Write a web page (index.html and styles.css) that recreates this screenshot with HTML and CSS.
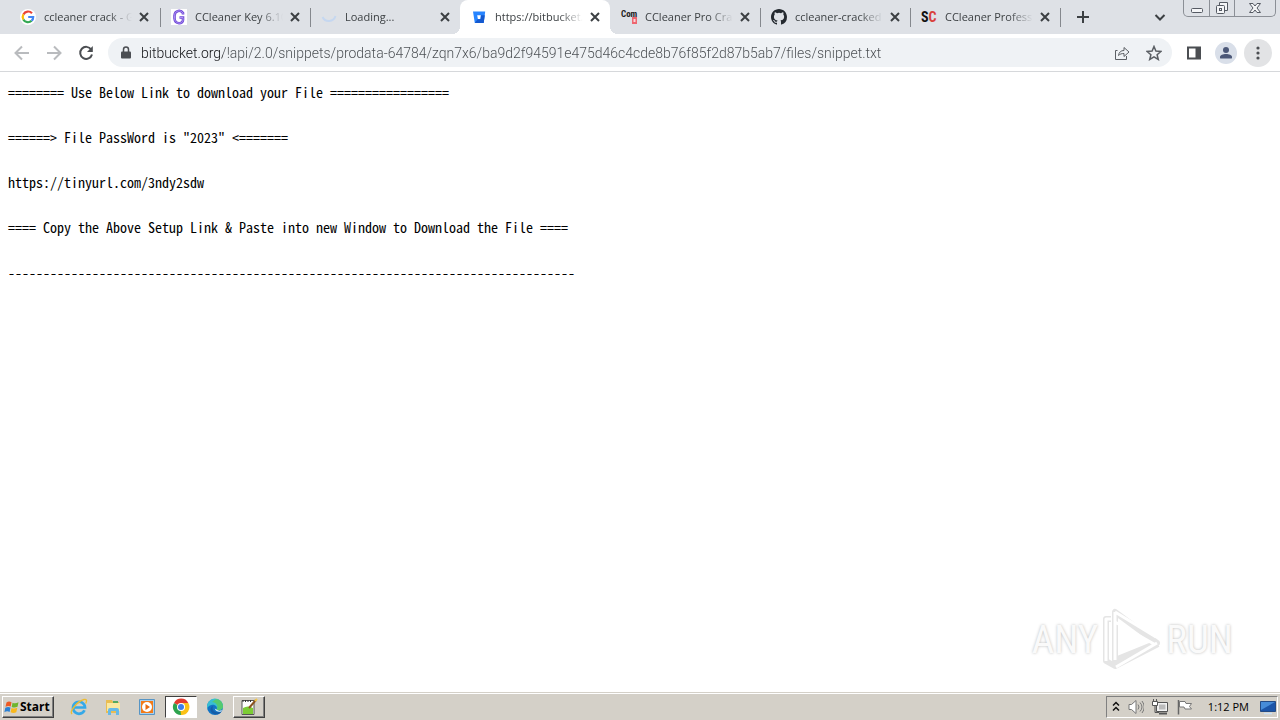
FILE: index.html
```html
<!DOCTYPE html>
<html lang="en">
<head>
<meta charset="utf-8">
<title>https://bitbucket.org</title>
<link rel="stylesheet" href="styles.css">
</head>
<body>
<header class="strip">
  <nav class="tabs">
    <div class="tab">
      <svg class="fav" viewBox="0 0 16 16"><circle cx="8" cy="8" r="8" fill="#fff"/><g fill="none" stroke-width="2.2"><path d="M12 4.2A5.3 5.3 0 0 0 3.4 5.4" stroke="#ea4335"/><path d="M3.4 5.4a5.3 5.3 0 0 0 0 5.2" stroke="#fbbc05"/><path d="M3.4 10.6a5.3 5.3 0 0 0 8.2 1.2" stroke="#34a853"/><path d="M11.6 11.8A5 5 0 0 0 13.2 8H8.2" stroke="#4285f4"/></g></svg>
      <button class="title">ccleaner crack - G</button>
      <button class="close" aria-label="Close tab"><svg viewBox="0 0 16 16"><path d="M4 4l8 8M12 4l-8 8"/></svg></button>
    </div>
    <div class="tab line">
      <svg class="fav" viewBox="0 0 16 16"><path fill="#fff" d="M0 0h16v16H0z"/><path d="M12 5.500V4C10 .8 4 .8 3.500 6.500v3c.5 6 8.500 6 8.500 1.500V8.500H8.500" fill="none" stroke="#7048d8" stroke-width="2.600"/><path d="M12 5.500V4C10 .8 4 .8 3.500 6.500v3c.5 6 8.500 6 8.500 1.500V8.500H8.500" fill="none" stroke="#b9a2f5" stroke-width=".8"/></svg>
      <button class="title">CCleaner Key 6.10</button>
      <button class="close" aria-label="Close tab"><svg viewBox="0 0 16 16"><path d="M4 4l8 8M12 4l-8 8"/></svg></button>
    </div>
    <div class="tab line">
      <svg class="fav" viewBox="0 0 16 16"><path d="M1.500 8a7 7 0 0 0 13-1" fill="none" stroke="#c5d7f0" stroke-width="2"/></svg>
      <button class="title">Loading...</button>
      <button class="close" aria-label="Close tab"><svg viewBox="0 0 16 16"><path d="M4 4l8 8M12 4l-8 8"/></svg></button>
    </div>
    <div class="tab active">
      <svg class="fav" viewBox="0 0 16 16"><path d="M2 2.500h12.200L12.700 14H3.800z" fill="#2684ff"/><path d="M9.800 6.200h4L12.700 14H3.800l2.800-3.800h2.800z" fill="#1459cf"/><path d="M6.200 6.200h3.600l-.6 3.900H6.900z" fill="#fff"/></svg>
      <button class="title">https://bitbucket.o</button>
      <button class="close" aria-label="Close tab"><svg viewBox="0 0 16 16"><path d="M4 4l8 8M12 4l-8 8"/></svg></button>
    </div>
    <div class="tab">
      <svg class="fav" viewBox="0 0 16 16"><path d="M11 8h5v7h-5z" fill="#ee6670"/><path d="M12.500 10h2v3h-2z" fill="#fbd5d8"/><text x="0" y="8" class="com">Com</text></svg>
      <button class="title">CCleaner Pro Crac</button>
      <button class="close" aria-label="Close tab"><svg viewBox="0 0 16 16"><path d="M4 4l8 8M12 4l-8 8"/></svg></button>
    </div>
    <div class="tab line">
      <svg class="fav" viewBox="0 0 16 16"><path fill="#24292f" d="M8 0C3.580 0 0 3.580 0 8c0 3.540 2.290 6.530 5.470 7.590.4.070.55-.17.55-.38 0-.19-.01-.82-.01-1.490-2.010.37-2.530-.49-2.690-.94-.09-.23-.48-.94-.82-1.130-.28-.15-.68-.52-.01-.53.63-.01 1.080.58 1.230.82.72 1.210 1.870.87 2.330.66.07-.52.28-.87.51-1.070-1.780-.2-3.640-.89-3.640-3.950 0-.87.31-1.590.82-2.150-.08-.2-.36-1.020.08-2.120 0 0 .67-.21 2.200.82a7.600 7.600 0 0 1 4 0c1.530-1.040 2.200-.82 2.200-.82.44 1.100.16 1.920.08 2.120.51.56.82 1.270.82 2.150 0 3.070-1.870 3.750-3.650 3.950.29.25.54.73.54 1.480 0 1.070-.01 1.930-.01 2.200 0 .21.15.46.55.38A8 8 0 0 0 16 8c0-4.420-3.580-8-8-8z"/></svg>
      <button class="title">ccleaner-cracked</button>
      <button class="close" aria-label="Close tab"><svg viewBox="0 0 16 16"><path d="M4 4l8 8M12 4l-8 8"/></svg></button>
    </div>
    <div class="tab line">
      <svg class="fav" viewBox="0 0 16 16"><text x="0" y="13" class="sc">S<tspan class="red">C</tspan></text></svg>
      <button class="title">CCleaner Professi</button>
      <button class="close" aria-label="Close tab"><svg viewBox="0 0 16 16"><path d="M4 4l8 8M12 4l-8 8"/></svg></button>
    </div>
    <button class="newtab" aria-label="New tab"><svg viewBox="0 0 16 16"><path d="M8 2v12M2 8h12"/></svg></button>
  </nav>
  <button class="search" aria-label="Search tabs"><svg viewBox="0 0 16 16"><path d="M3.500 6L8 10.500 12.500 6"/></svg></button>
  <div class="winctl">
    <button class="min" aria-label="Minimize"><svg viewBox="0 0 16 16"><rect x="2.500" y="8.500" width="11" height="4" rx="1"/></svg></button>
    <button class="restore" aria-label="Restore"><svg viewBox="0 0 16 16"><path d="M5.500 5V2.500h8v8H11"/><rect x="2.500" y="5.500" width="8" height="8" rx="1"/><rect x="5.500" y="8.500" width="2" height="2"/></svg></button>
    <button class="quit" aria-label="Close"><svg viewBox="0 0 16 16"><path d="M2.500 3.500h3.500l2 2.500 2-2.500h3.500L10 8l3.500 4.500H10L8 10l-2 2.500H2.500L6 8z"/></svg></button>
  </div>
</header>
<div class="toolbar">
  <button class="tool off" aria-label="Back"><svg viewBox="0 0 16 16"><path d="M15 8H2M8 1.500L1.500 8 8 14.500"/></svg></button>
  <button class="tool off" aria-label="Forward"><svg viewBox="0 0 16 16"><path d="M1 8h13M8 1.500L14.500 8 8 14.500"/></svg></button>
  <button class="tool" aria-label="Reload"><svg viewBox="0 0 16 16"><path d="M13.200 4.500A6 6 0 1 0 14 9.500"/><path d="M14.800 1v6H9z" fill="#4b4e52" stroke="none"/></svg></button>
  <div class="omnibox">
    <svg class="lock" viewBox="0 0 12 16"><path d="M2 6.500h8q1 0 1 1v5q0 1-1 1H2q-1 0-1-1v-5q0-1 1-1z" fill="#4b4e52"/><path d="M3.500 7V4.500a2.500 2.500 0 0 1 5 0V7" fill="none" stroke="#4b4e52" stroke-width="1.500"/></svg>
    <input class="url" type="text" aria-label="Address" value="bitbucket.org/!api/2.0/snippets/prodata-64784/zqn7x6/ba9d2f94591e475d46c4cde8b76f85f2d87b5ab7/files/snippet.txt">
    <button class="mini" aria-label="Share"><svg viewBox="0 0 16 16"><path d="M3.500 5.500H1.500v9h11V11M4.500 10.500C5 7 7 5.500 10 5.500v-3L15 7l-5 4.500v-3c-2.500 0-4 .5-5.500 2z"/></svg></button>
    <button class="mini" aria-label="Bookmark"><svg viewBox="0 0 16 16"><path d="M8 1.500l1.900 4.600 5 .4-3.800 3.200 1.200 4.800L8 11.900l-4.300 2.600 1.200-4.800L1.100 6.500l5-.4z" stroke-width="1.500"/></svg></button>
  </div>
  <button class="tool" aria-label="Side panel"><svg viewBox="0 0 16 16"><path d="M2 2.500h12v11H2z"/><path d="M9.500 2H15v12H9.500z" fill="#4b4e52" stroke="none"/></svg></button>
  <button class="tool profile" aria-label="Profile"><svg viewBox="0 0 16 16"><g fill="#4c5878" stroke="none"><circle cx="8" cy="5" r="3"/><path d="M2 13.500V12c0-4 12-4 12 0v1.500z"/></g></svg></button>
  <button class="tool menu" aria-label="Menu"><svg viewBox="0 0 16 16"><g fill="#4b4e52" stroke="none"><circle cx="8" cy="3" r="1.600"/><circle cx="8" cy="8" r="1.600"/><circle cx="8" cy="13" r="1.600"/></g></svg></button>
</div>
<main class="page">
<pre class="snippet">======== Use Below Link to download your File =================


======&gt; File PassWord is "2023" &lt;=======


https://tinyurl.com/3ndy2sdw


==== Copy the Above Setup Link &amp; Paste into new Window to Download the File ====


---------------------------------------------------------------------------------</pre>
<div class="mark"><span>ANY</span><svg viewBox="0 0 60 64"><g fill="none" stroke-linejoin="round"><path class="rim" d="M13 4v48L55 35zM9 11H4v42l9 5 43-22"/><path class="core" d="M13 4v48M13 4l41 25M13 14l39 22M9 11H4v42M14 59l41-24"/></g></svg><span>RUN</span></div>
</main>
<footer class="taskbar">
  <button class="start"><svg viewBox="0 0 16 16"><path d="M2.500 3.500C4.500 2 6 2.500 7.500 3.300L6.700 7.500C5 6.700 3.500 6.800 1.500 7.800z" fill="#ed5a24"/><path d="M8.500 3.700c2 1 3.700.8 6-.4l-1 4.400c-2 1-4 1-5.800.2z" fill="#6fb52d"/><path d="M1.300 8.800c2-1 3.500-1 5.200-.2L5.600 13c-1.700-1-3.500-.8-5.200.2z" fill="#2a80d4"/><path d="M7.500 9c2 .8 3.800.8 5.800-.2l-1 4.500c-2 1-3.900.9-5.700-.1z" fill="#f9b81c"/></svg>Start</button>
  <div class="quick">
    <button class="app" aria-label="Internet Explorer"><svg viewBox="0 0 18 18"><path d="M14.500 12.200A6 6 0 1 1 15 9.500H4" fill="none" stroke="#35a9e8" stroke-width="2.700"/><path d="M2 16C-1 13 8 3 14 1.500c3-.6 3 1.500 1.700 4" fill="none" stroke="#edbc32" stroke-width="1.400"/></svg></button>
    <button class="app" aria-label="Explorer"><svg viewBox="0 0 18 18"><path d="M2 2h6l1 2h6v11H2z" fill="#e9bd52"/><path d="M3 5h13v8H3z" fill="#fae8a0"/><path d="M9 3h5v2H9z" fill="#55a960"/><path d="M4 17v-5q0-2 2-2h7q2 0 2 2v5h-3v-4H7v4z" fill="#67b9e7"/></svg></button>
    <button class="app" aria-label="Media Player"><svg viewBox="0 0 18 18"><path d="M1.500 1.500h15v15h-15z" fill="#a9d0ee" stroke="#5795c5"/><path d="M3 3h12v12H3z" fill="#f27a18"/><circle cx="9" cy="9" r="5" fill="#fff"/><path d="M7.500 6l4.500 3-4.500 3z" fill="#e86a10"/></svg></button>
    <button class="app pressed" aria-label="Chrome"><svg viewBox="0 0 18 18"><path d="M9 9L2 5a8 8 0 0 1 14.300 0z" fill="#e33b2e"/><path d="M9 9l7.300-4A8 8 0 0 1 9 17z" fill="#fbc116"/><path d="M9 9v8A8 8 0 0 1 2 5z" fill="#2da34e"/><path d="M9 5h7.300L12.500 11 9 17l-.5-4z" fill="#fbc116"/><circle cx="9" cy="9" r="4" fill="#fff"/><circle cx="9" cy="9" r="3" fill="#3d7eea"/></svg></button>
    <button class="app" aria-label="Edge"><svg viewBox="0 0 18 18"><circle cx="9" cy="9" r="8" fill="#1273c4"/><path d="M1 9a8 8 0 0 1 16-1c.5 4-5 5-6.500 3.500C12 9 9 6 5.500 7 3 7.500 1.500 9 1 11z" fill="#39bfd2"/><path d="M10 1.100A8 8 0 0 1 17 8c.5 4-5 5-6.500 3.500C13 8 10 4 6 4z" fill="#55ca70"/><path d="M7 8c-2 4 2 8 8.500 5.500C13 18 5 17 4.500 12 4.500 10 5.500 8.500 7 8z" fill="#155ca7"/><path d="M10.500 11.500q2 2 5.500.5l-.8 1.500q-5 1-6.500-3z" fill="#d9eef5"/></svg></button>
    <button class="app raised" aria-label="Notepad++"><svg viewBox="0 0 18 18"><path d="M2 2.500h12v14H2z" fill="#fff" stroke="#555"/><path d="M3 10q5-3 10 0v6H3z" fill="#7ccc35"/><path d="M3 2v2M5.500 2v2M8 2v2M10.500 2v2" stroke="#333"/><path d="M9 10l7-8" stroke="#8a5320" stroke-width="2"/><path d="M15 3l2-2" stroke="#f3c74b" stroke-width="2"/></svg></button>
  </div>
  <div class="tray">
    <svg class="chev" viewBox="0 0 8 16"><path d="M1 6.500l3-3 3 3M1 11.500l3-3 3 3" fill="none" stroke="#111" stroke-width="1.500"/></svg>
    <svg viewBox="0 0 16 16"><path d="M1 5.500h2.500L8 1.500v13l-4.500-4H1z" fill="#fff" stroke="#777"/><path d="M10 5.500q2 2.500 0 5M12 3.500q4 4.500 0 9M14 2q4.500 6 0 12" fill="none" stroke="#777"/></svg>
    <svg viewBox="0 0 16 16"><path d="M4.500 3.500h11v9h-11z" fill="#f2f2f2" stroke="#555"/><path d="M7 5.500h6.500v5H7z" fill="#bbb"/><path d="M7 14.500h8" stroke="#555" stroke-width="2"/><path d="M.5 2.500h5v4h-5z" fill="#fff" stroke="#555"/><path d="M1.500 0v3M4.500 0v3M3 7v6.500h4" fill="none" stroke="#555"/></svg>
    <svg viewBox="0 0 16 16"><path d="M2.500 1v14.500" stroke="#666" stroke-width="1.500"/><path d="M3.500 2.500H9l1 2h5.500l-2 3 2 2.500H9l-1-2H3.500z" fill="#fff" stroke="#777"/></svg>
    <time class="clock">1:12 PM</time>
    <svg viewBox="0 0 16 16"><path d="M.5 2.500h15v10H.5z" fill="#1c55a8" stroke="#244b85"/><path d="M1 3h14L1 11z" fill="#478cd8"/><path d="M4 14.500h8" stroke="#cce1f4" stroke-width="1.500"/></svg>
  </div>
</footer>
</body>
</html>
```
FILE: styles.css
```css
* { box-sizing: border-box; }
body {
  margin: 0;
  min-height: 100vh;
  display: flex;
  flex-direction: column;
  background: #fff;
  font: 11px/16px "Open Sans", sans-serif;
  color: #3c4043;
}
button {
  margin: 0;
  padding: 0;
  border: 0;
  background: none;
  font: inherit;
  color: inherit;
}
svg { display: block; flex: none; }
.strip {
  display: flex;
  height: 34px;
  background: #dee1e6;
}
.tabs {
  flex: 1;
  min-width: 0;
  display: flex;
  padding-left: 10px;
}
.tab {
  flex: 0 1 150px;
  min-width: 0;
  display: flex;
  align-items: center;
  padding: 0 7px 0 11px;
  position: relative;
}
.tab:first-child { padding: 0 8px 0 10px; }
.line::before, .line + .newtab::before {
  content: "";
  position: absolute;
  left: 0;
  top: 8px;
  width: 1px;
  height: 19px;
  background: #85888d;
}
.active {
  background: #fff;
  border-radius: 8px 8px 0 0;
}
.active::before, .active::after {
  content: "";
  position: absolute;
  bottom: 0;
  width: 8px;
  height: 8px;
}
.active::before {
  right: 100%;
  background: radial-gradient(circle at 0 0, transparent 8px, #fff 8px);
}
.active::after {
  left: 100%;
  background: radial-gradient(circle at 100% 0, transparent 8px, #fff 8px);
}
.fav { width: 16px; height: 16px; overflow: visible; }
.com { font: bold 9px "Roboto Condensed", Roboto, sans-serif; fill: #222; }
.sc { font: bold 14px "Roboto Condensed", Roboto, sans-serif; fill: #111; }
.red { fill: #d9403d; }
.title {
  flex: 1;
  min-width: 0;
  margin: 0 4px 0 8px;
  overflow: hidden;
  white-space: nowrap;
  text-align: left;
  mask-image: linear-gradient(to left, transparent, #000 24px);
}
.close svg, .newtab svg, .search svg {
  width: 16px;
  height: 16px;
  fill: none;
  stroke: #3c4043;
  stroke-width: 2;
}
.newtab {
  position: relative;
  width: 45px;
  display: grid;
  place-items: center;
}
.search {
  width: 46px;
  display: grid;
  place-items: center;
}
.winctl {
  display: flex;
  align-self: flex-start;
  height: 17px;
  margin-right: 4px;
  border: 1px solid #8b8f96;
  border-top: 0;
  border-radius: 0 0 5px 5px;
}
.winctl button {
  width: 25px;
  display: grid;
  place-items: center;
}
.winctl button + button { border-left: 1px solid #8b8f96; }
.winctl .quit { width: 41px; }
.winctl svg {
  width: 16px;
  height: 16px;
  fill: #f4f5f7;
  stroke: #555a63;
}
.toolbar {
  display: flex;
  align-items: center;
  height: 38px;
  padding: 0 8px;
  border-bottom: 1px solid #d6d8db;
}
.tool {
  width: 28px;
  height: 28px;
  margin-right: 4px;
  display: grid;
  place-items: center;
  border-radius: 50%;
}
.tool svg {
  width: 16px;
  height: 16px;
  fill: none;
  stroke: #4b4e52;
  stroke-width: 2;
}
.tool.off svg { stroke: #b9bbbe; }
.profile svg {
  width: 22px;
  height: 22px;
  padding: 3px;
  border-radius: 50%;
  background: #d9dfe9;
}
.menu { background: #e2e3e5; margin-right: 0; }
.omnibox {
  flex: 1;
  min-width: 0;
  height: 29px;
  display: flex;
  align-items: center;
  margin: 0 8px 0 4px;
  padding: 0 10px 0 12px;
  gap: 16px;
  border-radius: 15px;
  background: #eff2f5;
}
.lock { width: 12px; height: 16px; }
.url {
  flex: 1;
  min-width: 0;
  margin-left: -7px;
  padding: 0;
  border: 0;
  outline: 0;
  font: 300 14px/20px Roboto, sans-serif;
  color: transparent;
  background: linear-gradient(to right, #101114 82px, #484c50 82px);
  background-clip: text;
}
.mini svg {
  width: 16px;
  height: 16px;
  fill: none;
  stroke: #5b5f64;
}
.page {
  flex: 1;
  position: relative;
  padding: 13px 8px;
}
.snippet {
  margin: 0;
  font: 14px/15px "Noto Sans Mono CJK SC", "Noto Sans Mono CJK JP", monospace;
  color: #000;
}
.mark {
  position: absolute;
  right: 47px;
  bottom: 20px;
  display: flex;
  align-items: center;
  gap: 4px;
  font: 39px/64px "Roboto Condensed", Roboto, sans-serif;
  color: #fafafa;
  text-shadow: 0 0 3px #bbb;
}
.mark svg { width: 60px; height: 64px; }
.rim { stroke: #e5e5e5; stroke-width: 6; }
.core { stroke: #fff; stroke-width: 3; }
.taskbar {
  height: 28px;
  display: flex;
  align-items: center;
  padding: 2px 2px;
  border-top: 1px solid #d4d0c8;
  background: #d4d0c8;
  box-shadow: inset 0 1px #fff;
}
.start {
  display: flex;
  align-items: center;
  width: 52px;
  height: 22px;
  padding-left: 1px;
  font: bold 12px/16px "Open Sans", sans-serif;
  color: #000;
}
.start svg { width: 16px; height: 16px; }
.start, .raised {
  border: 1px solid;
  border-color: #fff #404040 #404040 #fff;
  box-shadow: inset -1px -1px #808080;
}
.quick {
  display: flex;
  gap: 2px;
  margin-left: 9px;
}
.app {
  width: 32px;
  height: 22px;
  display: grid;
  place-items: center;
}
.app svg { width: 18px; height: 18px; }
.pressed {
  background: #fff;
  border: 1px solid;
  border-color: #404040 #fff #fff #404040;
}
.tray {
  display: flex;
  align-items: center;
  gap: 8px;
  height: 22px;
  margin-left: auto;
  padding: 0 1px 0 5px;
  border: 1px solid;
  border-color: #808080 #fff #fff #808080;
}
.tray svg { width: 16px; height: 16px; }
.tray .chev { width: 8px; }
.clock {
  margin: 0 3px 0 8px;
  color: #000;
}
```
